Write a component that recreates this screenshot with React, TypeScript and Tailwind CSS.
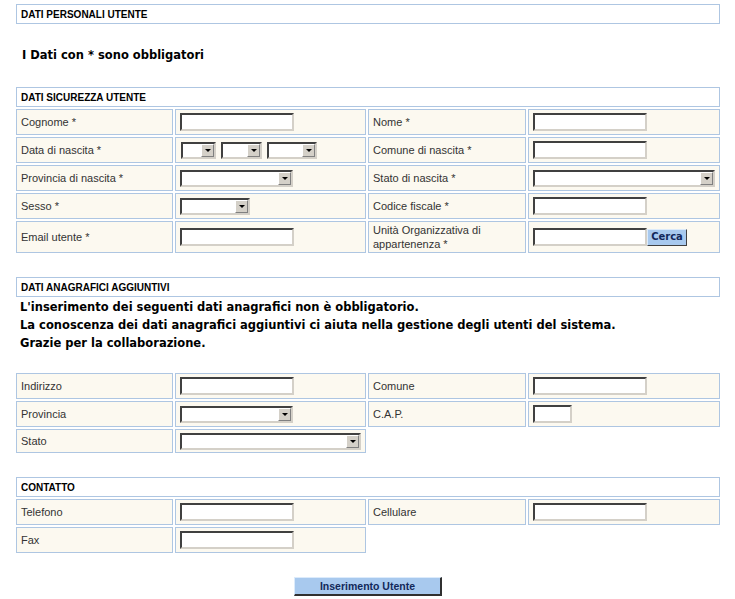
import React from 'react';

const sans = "font-['Liberation_Sans',Arial,sans-serif]";
const verdana = "font-['DejaVu_Sans',Verdana,sans-serif]";

function Header({ children }: { children: React.ReactNode }) {
  return (
    <div className={`col-span-4 h-[20px] border border-[#aec6e2] bg-white flex items-center px-1 text-[10px] font-bold text-black ${sans}`}>
      {children}
    </div>
  );
}

function Label({ children, h = 'h-[26px]' }: { children?: React.ReactNode; h?: string }) {
  return (
    <div className={`${h} border border-[#aec6e2] bg-[#fcf9f0] flex items-center px-1 text-[11px] leading-[14px] text-[#333] ${sans}`}>
      {children}
    </div>
  );
}

function Field({ children, h = 'h-[26px]' }: { children?: React.ReactNode; h?: string }) {
  return (
    <div className={`${h} border border-[#aec6e2] bg-[#fcf9f0] flex items-center px-1`}>
      {children}
    </div>
  );
}

function TextBox({ w = 'w-[114px]' }: { w?: string }) {
  return (
    <input
      type="text"
      className={`${w} h-[18px] bg-white border-2 border-t-[#404040] border-l-[#404040] border-b-[#d4d0c8] border-r-[#d4d0c8] outline-none`}
    />
  );
}

function Select({ w }: { w: string }) {
  return (
    <div className={`${w} h-[17px] bg-white border-2 border-t-[#404040] border-l-[#404040] border-b-[#d4d0c8] border-r-[#d4d0c8] flex justify-end`}>
      <div className="w-[13px] h-full bg-[#d4d0c8] border border-t-white border-l-white border-b-[#808080] border-r-[#808080] flex items-center justify-center">
        <div className="w-0 h-0 border-l-[3px] border-r-[3px] border-t-[3px] border-l-transparent border-r-transparent border-t-black" />
      </div>
    </div>
  );
}

export default function App() {
  return (
    <div className="min-h-screen bg-white">
      <div className="pl-4 pt-1 w-[720px]">
        <div className="grid grid-cols-[157px_191px_158px_192px] gap-[2px]">
          <Header>DATI PERSONALI UTENTE</Header>
        </div>

        <p className={`mt-[21px] mb-[22px] h-[20px] leading-[20px] pl-[6px] text-[11.5px] font-bold text-black ${verdana}`}>
          I Dati con * sono obbligatori
        </p>

        {/* dati sicurezza */}
        <div className="grid grid-cols-[157px_191px_158px_192px] gap-[2px]">
          <Header>DATI SICUREZZA UTENTE</Header>

          <Label>Cognome *</Label>
          <Field><TextBox /></Field>
          <Label>Nome *</Label>
          <Field><TextBox /></Field>

          <Label>Data di nascita *</Label>
          <Field>
            <div className="flex gap-[5px] pl-px">
              <Select w="w-[35px]" />
              <Select w="w-[41px]" />
              <Select w="w-[50px]" />
            </div>
          </Field>
          <Label>Comune di nascita *</Label>
          <Field><TextBox /></Field>

          <Label>Provincia di nascita *</Label>
          <Field><Select w="w-[113px]" /></Field>
          <Label>Stato di nascita *</Label>
          <Field><Select w="w-[186px]" /></Field>

          <Label>Sesso *</Label>
          <Field><Select w="w-[70px]" /></Field>
          <Label>Codice fiscale *</Label>
          <Field><TextBox /></Field>

          <Label h="h-[32px]">Email utente *</Label>
          <Field h="h-[32px]"><TextBox /></Field>
          <Label h="h-[32px]">Unità Organizzativa di<br />appartenenza *</Label>
          <Field h="h-[32px]">
            <div className="flex items-center">
              <TextBox w="w-[114px]" />
              <button className={`w-[40px] h-[17px] bg-[#a8c9ee] border border-t-[#dcebfb] border-l-[#dcebfb] border-b-[#404040] border-r-[#404040] text-[10px] font-bold text-[#12285a] leading-none ${verdana}`}>
                Cerca
              </button>
            </div>
          </Field>
        </div>

        {/* dati anagrafici */}
        <div className="grid grid-cols-[157px_191px_158px_192px] gap-[2px] mt-[24px]">
          <Header>DATI ANAGRAFICI AGGIUNTIVI</Header>
        </div>
        <div className={`pl-1 mt-px text-[11.5px] leading-[18px] font-bold text-black ${verdana}`}>
          <p>L'inserimento dei seguenti dati anagrafici non è obbligatorio.</p>
          <p>La conoscenza dei dati anagrafici aggiuntivi ci aiuta nella gestione degli utenti del sistema.</p>
          <p>Grazie per la collaborazione.</p>
        </div>

        <div className="grid grid-cols-[157px_191px_158px_192px] gap-[2px] mt-[21px]">
          <Label>Indirizzo</Label>
          <Field><TextBox /></Field>
          <Label>Comune</Label>
          <Field><TextBox /></Field>

          <Label>Provincia</Label>
          <Field><Select w="w-[113px]" /></Field>
          <Label>C.A.P.</Label>
          <Field><TextBox w="w-[39px]" /></Field>

          <Label h="h-[24px]">Stato</Label>
          <Field h="h-[24px]"><Select w="w-[185px]" /></Field>
          <div />
          <div />
        </div>

        {/* contatto */}
        <div className="grid grid-cols-[157px_191px_158px_192px] gap-[2px] mt-[24px]">
          <Header>CONTATTO</Header>

          <Label>Telefono</Label>
          <Field><TextBox /></Field>
          <Label>Cellulare</Label>
          <Field><TextBox /></Field>

          <Label>Fax</Label>
          <Field><TextBox /></Field>
          <div />
          <div />
        </div>

        <div className="flex justify-center mt-[24px] pb-2">
          <button className={`w-[148px] h-[19px] bg-[#a8c9ee] border border-t-[#dcebfb] border-l-[#dcebfb] border-b-2 border-r-2 border-b-[#303030] border-r-[#303030] text-[10.5px] font-bold text-[#12285a] leading-none ${sans}`}>
            Inserimento Utente
          </button>
        </div>
      </div>
    </div>
  );
}
